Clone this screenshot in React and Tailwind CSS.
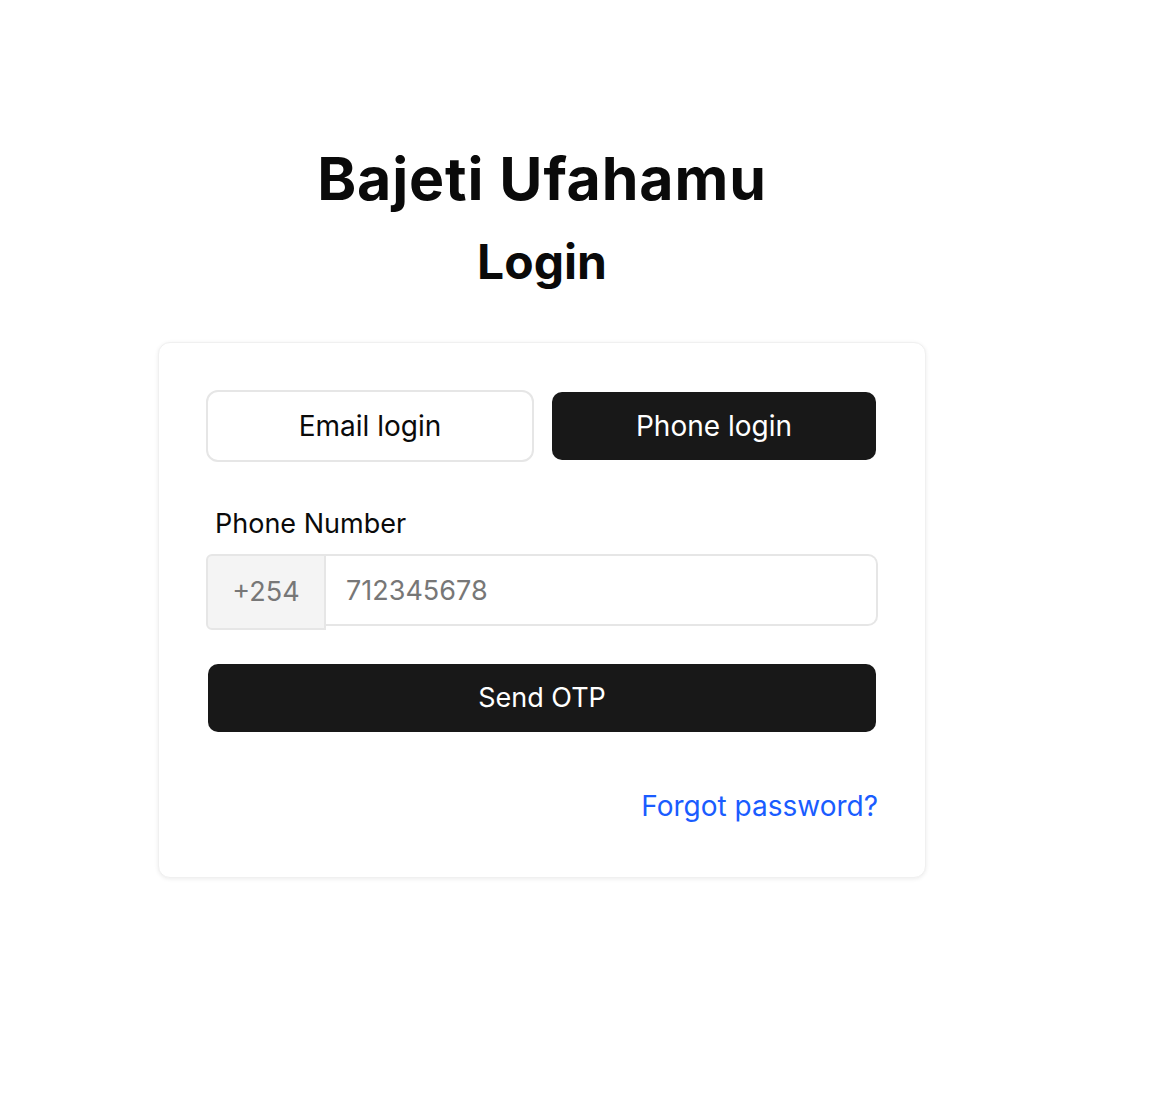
export default function App() {
  return (
    <div className="min-h-screen bg-white text-[#0a0a0a] font-['Inter',sans-serif]">
      <div className="ml-[158px] w-[768px] pt-[147px]">
        <h1 className="text-center text-[59px] font-bold leading-[64px] tracking-[0.015em]">
          Bajeti Ufahamu
        </h1>
        <h2 className="mt-[25px] text-center text-[48px] font-bold leading-[52px]">Login</h2>

        <div className="mt-[54px] rounded-xl border border-[#f0f0f0] bg-white px-[47px] pt-[47px] pb-[55px] shadow-[0_1px_4px_rgba(0,0,0,0.08)]">
          <div className="flex items-center gap-[18px]">
            <button className="h-[72px] w-[328px] rounded-[12px] border-2 border-[#e6e6e6] bg-white text-[28px] font-normal">
              Email login
            </button>
            <button className="h-[68px] w-[324px] rounded-[10px] bg-[#181818] text-[28px] font-normal text-white">
              Phone login
            </button>
          </div>

          <label className="mt-[46px] block pl-[9px] text-[27px] leading-[32px]">Phone Number</label>

          <div className="mt-[14px] flex items-start">
            <div className="flex h-[76px] w-[120px] shrink-0 items-center justify-center rounded-l-[6px] border-2 border-[#e6e6e6] bg-[#f4f4f4] text-[27px] text-[#777]">
              +254
            </div>
            <input
              className="h-[72px] flex-1 rounded-r-[10px] border-2 border-l-0 border-[#e6e6e6] bg-white px-5 text-[27px] outline-none placeholder-[#777]"
              placeholder="712345678"
            />
          </div>

          <button className="mx-[2px] mt-[34px] h-[68px] w-[668px] rounded-[10px] bg-[#181818] text-[27px] text-white">
            Send OTP
          </button>

          <div className="mt-[58px] flex justify-end">
            <a href="#" className="text-[28px] leading-[32px] text-[#1a5cff]">
              Forgot password?
            </a>
          </div>
        </div>
      </div>
    </div>
  );
}
